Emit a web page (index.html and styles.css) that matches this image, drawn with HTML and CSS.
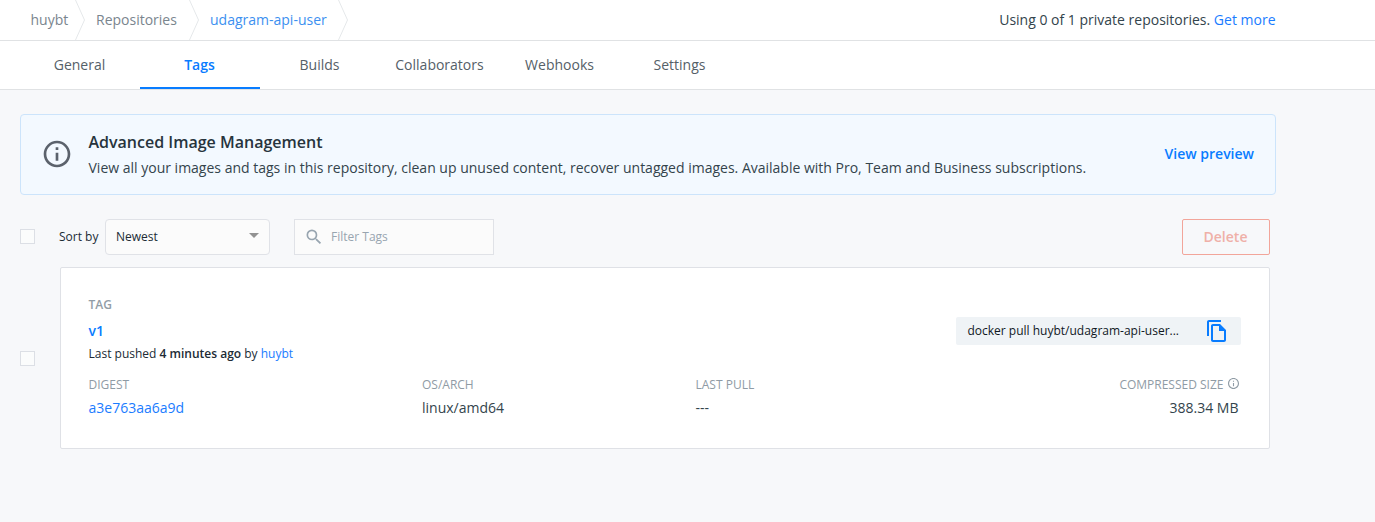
FILE: index.html
```html
<!DOCTYPE html>
<html lang="en">
<head>
<meta charset="utf-8">
<title>udagram-api-user</title>
<link rel="stylesheet" href="styles.css">
</head>
<body>
<header class="topbar">
  <nav class="crumbs">
    <a class="crumb crumb-owner">huybt</a>
    <svg class="chevron" viewBox="0 0 11 40"><path d="M.5 0L9.500 20L.5 40"/></svg>
    <a class="crumb crumb-repos">Repositories</a>
    <svg class="chevron" viewBox="0 0 11 40"><path d="M.5 0L9.500 20L.5 40"/></svg>
    <a class="crumb crumb-current">udagram-api-user</a>
    <svg class="chevron" viewBox="0 0 11 40"><path d="M.5 0L9.500 20L.5 40"/></svg>
  </nav>
  <p class="usage">Using 0 of 1 private repositories. <a class="link">Get more</a></p>
</header>
<nav class="tabs">
  <a class="tab">General</a>
  <a class="tab tab-active">Tags</a>
  <a class="tab">Builds</a>
  <a class="tab">Collaborators</a>
  <a class="tab">Webhooks</a>
  <a class="tab">Settings</a>
</nav>
<main class="content">
  <section class="banner">
    <svg class="banner-icon" viewBox="0 0 24 24"><path d="M11 7h2v2h-2zm0 4h2v6h-2zm1-9C6.480 2 2 6.480 2 12s4.480 10 10 10 10-4.480 10-10S17.520 2 12 2zm0 18c-4.410 0-8-3.590-8-8s3.590-8 8-8 8 3.590 8 8-3.590 8-8 8z"/></svg>
    <div class="banner-text">
      <h2 class="banner-title">Advanced Image Management</h2>
      <p class="banner-copy">View all your images and tags in this repository, clean up unused content, recover untagged images. Available with Pro, Team and Business subscriptions.</p>
    </div>
    <a class="preview">View preview</a>
  </section>
  <section class="toolbar">
    <span class="checkbox"></span>
    <span class="sort-label">Sort by</span>
    <div class="select"><span>Newest</span><svg class="caret" viewBox="0 0 10 5"><path d="M0 0h10L5 5z"/></svg></div>
    <div class="filter">
      <svg class="search" viewBox="0 0 24 24"><path d="M15.500 14h-.79l-.28-.27A6.471 6.471 0 0 0 16 9.500 6.500 6.500 0 1 0 9.500 16c1.610 0 3.090-.59 4.230-1.570l.27.28v.79l5 4.990L20.490 19l-4.990-5zm-6 0C7.010 14 5 11.990 5 9.500S7.010 5 9.500 5 14 7.010 14 9.500 11.990 14 9.500 14z"/></svg>
      <span>Filter Tags</span>
    </div>
    <button class="delete">Delete</button>
  </section>
  <section class="row">
    <span class="checkbox"></span>
    <article class="card">
      <div class="card-top">
        <div>
          <div class="tag-label">TAG</div>
          <a class="tag-name">v1</a>
          <p class="pushed">Last pushed <b>4 minutes ago</b> by <a class="link">huybt</a></p>
        </div>
        <div class="pull">
          <span>docker pull huybt/udagram-api-user...</span>
          <svg class="copy" viewBox="0 0 24 24"><path d="M16 1H4c-1.100 0-2 .9-2 2v14h2V3h12V1zm-1 4H8c-1.100 0-1.990.9-1.990 2L6 21c0 1.100.89 2 1.990 2H19c1.100 0 2-.9 2-2V11l-6-6zM8 21V7h6v5h5v9H8z"/></svg>
        </div>
      </div>
      <div class="details">
        <div><div class="label">DIGEST</div><a class="value link">a3e763aa6a9d</a></div>
        <div><div class="label">OS/ARCH</div><div class="value">linux/amd64</div></div>
        <div><div class="label">LAST PULL</div><div class="value">---</div></div>
        <div class="size">
          <div class="label">COMPRESSED SIZE <svg class="hint" viewBox="2 2 20 20"><path d="M11 7h2v2h-2zm0 4h2v6h-2zm1-9C6.480 2 2 6.480 2 12s4.480 10 10 10 10-4.480 10-10S17.520 2 12 2zm0 18c-4.410 0-8-3.590-8-8s3.590-8 8-8 8 3.590 8 8-3.590 8-8 8z"/></svg></div>
          <div class="value">388.34 MB</div>
        </div>
      </div>
    </article>
  </section>
</main>
</body>
</html>
```
FILE: styles.css
```css
* { box-sizing: border-box; }
body {
  margin: 0;
  min-height: 522px;
  background: #f7f8fa;
  color: #33444c;
  font: 14px/20px "Open Sans", sans-serif;
}
p, h2 { margin: 0; }
svg { display: block; flex: none; }
a, span, p { white-space: nowrap; }
.link { color: #1a7cff; }

.topbar {
  display: flex;
  justify-content: space-between;
  height: 41px;
  padding: 0 99.500px 0 0;
  background: #fff;
  border-bottom: 1px solid #e0e2e4;
}
.crumbs { display: flex; }
.crumb { line-height: 40px; color: #7a858e; }
.crumb-owner { width: 75px; padding-left: 30.500px; }
.crumb-repos { width: 103px; padding-left: 10px; }
.crumb-current { width: 138px; padding-left: 10px; color: #3c90f0; }
.chevron { width: 11px; height: 40px; fill: none; stroke: #e5e8ea; }
.usage { line-height: 40px; }

.tabs {
  display: flex;
  height: 49px;
  padding-left: 20px;
  background: #fff;
  border-bottom: 1px solid #e0e2e4;
}
.tab { width: 120px; padding-right: 1px; line-height: 48px; text-align: center; color: #556068; }
.tab-active { color: #087cff; font-weight: 600; border-bottom: 2px solid #087cff; }

.content { padding: 24px 99px 0 20px; }
.banner {
  display: flex;
  align-items: center;
  height: 81px;
  padding: 0 21px 1px 20px;
  border: 1px solid #cce4fb;
  border-radius: 4px;
  background: #f3f9ff;
}
.banner-icon { width: 32px; height: 32px; fill: #5b626c; }
.banner-text { flex: 1; padding: 3px 0 0 15.500px; }
.banner-title { font-size: 16px; line-height: 24px; font-weight: 600; color: #27343d; }
.banner-copy { line-height: 28px; }
.preview { font-weight: 600; color: #087cff; }

.toolbar {
  display: flex;
  align-items: center;
  height: 36px;
  margin-top: 24px;
  padding-right: 6px;
  font-size: 12px;
}
.checkbox { flex: none; width: 15px; height: 15px; border: 1px solid #dcdfe5; background: #fbfcfc; }
.toolbar .checkbox { margin-bottom: 1px; }
.sort-label { width: 46px; margin-left: 24px; color: #202b35; }
.select {
  display: flex;
  align-items: center;
  justify-content: space-between;
  width: 165px;
  height: 36px;
  padding: 0 10px;
  border: 1px solid #e0e2e7;
  border-radius: 4px;
  background: #fbfbfb;
  color: #202b35;
}
.caret { width: 10px; height: 5px; margin-top: -3px; fill: #929292; }
.filter {
  display: flex;
  align-items: center;
  gap: 7px;
  width: 200px;
  height: 36px;
  margin-left: 24px;
  padding-left: 9px;
  border: 1px solid #e0e2e7;
  background: #fbfbfb;
  color: #98a5b0;
}
.search { width: 20px; height: 20px; fill: #98a5b0; }
.delete {
  width: 88px;
  height: 36px;
  margin-left: auto;
  padding: 0 1px 0 0;
  border: 1px solid #f2a59a;
  border-radius: 2px;
  background: transparent;
  color: #efb0a8;
  font: 600 14px/20px "Open Sans", sans-serif;
}

.row { display: flex; align-items: center; margin-top: 12px; padding-right: 6px; }
.card {
  flex: 1;
  height: 182px;
  margin-left: 25px;
  padding: 27px 28px 0 27.500px;
  border: 1px solid #dfe1e6;
  border-radius: 2px;
  background: #fff;
}
.card-top { display: flex; justify-content: space-between; }
.tag-label { font-size: 12px; font-weight: 600; color: #929da6; }
.tag-name { display: block; margin-top: 6px; font-weight: 600; color: #087cff; }
.pushed { margin-top: 3px; font-size: 12px; color: #202b35; }
.pushed b { font-weight: 600; }
.pull {
  display: flex;
  align-items: center;
  justify-content: space-between;
  width: 285px;
  height: 28px;
  margin-top: 22px;
  padding: 0 12px 0 11.500px;
  border-radius: 2px;
  background: #eff3f6;
  color: #10181f;
  font-size: 12px;
}
.copy { width: 24px; height: 24px; fill: #087cff; }
.details { display: grid; grid-template-columns: 333.500px 273.500px 1fr 130px; margin-top: 11px; }
.label { font-size: 12px; line-height: 20px; color: #8f9ba5; white-space: nowrap; }
.value { display: block; margin-top: 3px; }
.size { padding-right: 2.500px; text-align: right; }
.size .label { display: flex; justify-content: flex-end; gap: 4px; }
.hint { width: 11px; height: 11px; margin-top: 3px; fill: #8f9ba5; }
```
